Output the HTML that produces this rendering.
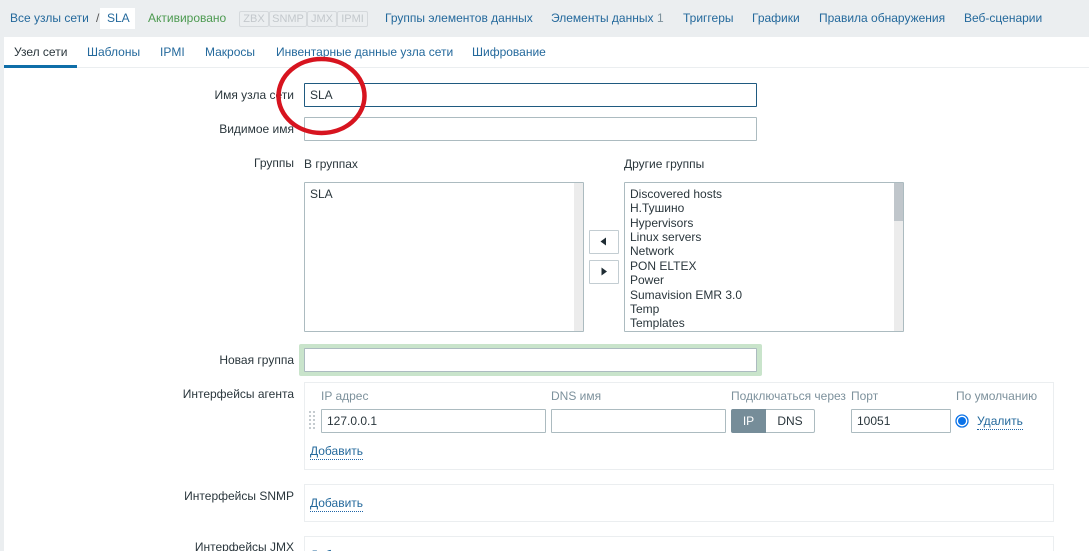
<!DOCTYPE html>
<html lang="ru"><head><meta charset="utf-8"><title>Узел сети</title>
<style>
html,body{margin:0;padding:0;width:1089px;height:551px;overflow:hidden}
#p{left:0;top:0;width:1089px;height:551px;overflow:hidden;background:#ebeef0;font:12px/14px "Liberation Sans",Arial,sans-serif;color:#2a363c}
div,a,span.t{position:absolute;box-sizing:border-box;white-space:nowrap}
a{color:#24699c;text-decoration:none}
.r{text-align:right;width:200px}
.g{color:#7d919c}
.in{background:#fff;border:1px solid #acbbc0;border-radius:1px;height:24px}
.u{border-bottom:1px dotted #1f65a6;line-height:14px;height:16px}
.bx{border:1px solid #ebeef0;background:#fff}
.st{top:11px;height:16px;border:1px solid #d5d9dc;color:#c3c8cc;background:#ebeef0;text-align:center;line-height:14px;font-size:11px;border-radius:2px}
</style></head><body>
<div id="p">
<a style="left:10px;top:11px">Все узлы сети</a>
<span class="t" style="left:96px;top:11px;color:#555">/</span>
<div style="left:100px;top:8px;width:35px;height:21px;background:#fff"></div>
<a style="left:107px;top:11px">SLA</a>
<a style="left:148px;top:11px;color:#4c9a50">Активировано</a>
<div class="st" style="left:239px;width:30px">ZBX</div>
<div class="st" style="left:269px;width:38px">SNMP</div>
<div class="st" style="left:307px;width:30px">JMX</div>
<div class="st" style="left:337px;width:31px">IPMI</div>
<a style="left:385px;top:11px">Группы элементов данных</a>
<a style="left:551px;top:11px">Элементы данных</a>
<span class="t g" style="left:657px;top:11px">1</span>
<a style="left:683px;top:11px">Триггеры</a>
<a style="left:752px;top:11px">Графики</a>
<a style="left:819px;top:11px">Правила обнаружения</a>
<a style="left:964px;top:11px">Веб-сценарии</a>

<div style="left:4px;top:37px;width:1085px;height:514px;background:#fff"></div>
<div style="left:4px;top:67px;width:1085px;height:1px;background:#ebeef0"></div>
<div style="left:4px;top:65px;width:73px;height:3px;background:#0f6ea8"></div>
<span class="t" style="left:14px;top:45px">Узел сети</span>
<a style="left:87px;top:45px">Шаблоны</a>
<a style="left:160px;top:45px">IPMI</a>
<a style="left:205px;top:45px">Макросы</a>
<a style="left:276px;top:45px">Инвентарные данные узла сети</a>
<a style="left:472px;top:45px">Шифрование</a>

<span class="t r" style="left:94px;top:88px">Имя узла сети</span>
<div class="in" style="left:304px;top:83px;width:453px;border-color:#1f5a80;padding:4px 5px">SLA</div>
<span class="t r" style="left:94px;top:122px">Видимое имя</span>
<div class="in" style="left:304px;top:117px;width:453px"></div>

<span class="t r" style="left:94px;top:156px">Группы</span>
<span class="t" style="left:304px;top:157px">В группах</span>
<span class="t" style="left:624px;top:157px">Другие группы</span>
<div class="in" style="left:304px;top:182px;width:280px;height:150px"></div>
<div style="left:574px;top:183px;width:9px;height:148px;background:#ececec"></div>
<span class="t" style="left:310px;top:187px">SLA</span>
<div class="in" style="left:624px;top:182px;width:280px;height:150px"></div>
<div style="left:894px;top:183px;width:9px;height:148px;background:#ececec"></div>
<div style="left:894px;top:183px;width:9px;height:38px;background:#c0c6cb"></div>
<span class="t" style="left:630px;top:187px">Discovered hosts</span>
<span class="t" style="left:630px;top:201px">Н.Тушино</span>
<span class="t" style="left:630px;top:216px">Hypervisors</span>
<span class="t" style="left:630px;top:230px">Linux servers</span>
<span class="t" style="left:630px;top:244px">Network</span>
<span class="t" style="left:630px;top:259px">PON ELTEX</span>
<span class="t" style="left:630px;top:273px">Power</span>
<span class="t" style="left:630px;top:288px">Sumavision EMR 3.0</span>
<span class="t" style="left:630px;top:302px">Temp</span>
<span class="t" style="left:630px;top:316px">Templates</span>
<div class="in" style="left:589px;top:230px;width:30px;height:24px;border-color:#c3cdd2"></div>
<div class="in" style="left:589px;top:260px;width:30px;height:24px;border-color:#c3cdd2"></div>
<svg style="position:absolute;left:589px;top:230px" width="30" height="54"><path d="M17 7.5V15.5L11.5 11.5Z" fill="#1f2c33"/><path d="M12.5 37.5V45.5L18 41.5Z" fill="#1f2c33"/></svg>

<span class="t r" style="left:94px;top:353px">Новая группа</span>
<div style="left:299px;top:344px;width:463px;height:32px;background:#c9e4cb;border-radius:2px"></div>
<div class="in" style="left:304px;top:348px;width:453px;height:24px"></div>

<span class="t r" style="left:94px;top:387px">Интерфейсы агента</span>
<div class="bx" style="left:304px;top:382px;width:750px;height:88px"></div>
<span class="t g" style="left:321px;top:389px">IP адрес</span>
<span class="t g" style="left:551px;top:389px">DNS имя</span>
<span class="t g" style="left:731px;top:389px">Подключаться через</span>
<span class="t g" style="left:851px;top:389px">Порт</span>
<span class="t g" style="left:956px;top:389px">По умолчанию</span>
<svg style="position:absolute;left:309px;top:411px" width="8" height="20" fill="#c5cbcf"><rect x="0" y="0" width="2" height="2"/><rect x="4" y="0" width="2" height="2"/><rect x="0" y="4" width="2" height="2"/><rect x="4" y="4" width="2" height="2"/><rect x="0" y="8" width="2" height="2"/><rect x="4" y="8" width="2" height="2"/><rect x="0" y="12" width="2" height="2"/><rect x="4" y="12" width="2" height="2"/><rect x="0" y="16" width="2" height="2"/><rect x="4" y="16" width="2" height="2"/></svg>
<div class="in" style="left:321px;top:409px;width:225px;padding:4px 5px">127.0.0.1</div>
<div class="in" style="left:551px;top:409px;width:175px"></div>
<div style="left:731px;top:409px;width:35px;height:24px;background:#768d99;color:#fff;text-align:center;line-height:24px;border-radius:2px 0 0 2px">IP</div>
<div style="left:766px;top:409px;width:49px;height:24px;background:#fff;border:1px solid #acbbc0;border-left:0;text-align:center;line-height:22px;border-radius:0 2px 2px 0">DNS</div>
<div class="in" style="left:851px;top:409px;width:100px;padding:4px 5px">10051</div>
<svg style="position:absolute;left:955px;top:414px" width="14" height="14"><circle cx="7" cy="7" r="6" fill="#fff" stroke="#0a72e8" stroke-width="1.3"/><circle cx="7" cy="7" r="4" fill="#0a72e8"/></svg>
<a class="u" style="left:977px;top:414px">Удалить</a>
<a class="u" style="left:310px;top:444px">Добавить</a>

<span class="t r" style="left:94px;top:489px">Интерфейсы SNMP</span>
<div class="bx" style="left:304px;top:484px;width:750px;height:38px"></div>
<a class="u" style="left:310px;top:496px">Добавить</a>

<span class="t r" style="left:94px;top:540px">Интерфейсы JMX</span>
<div class="bx" style="left:304px;top:536px;width:750px;height:40px"></div>
<a class="u" style="left:310px;top:548px">Добавить</a>

<svg style="position:absolute;left:270px;top:52px" width="104" height="90"><ellipse cx="51.5" cy="44" rx="43" ry="37" fill="none" stroke="#d7141f" stroke-width="4.5"/></svg>
</div>
</body></html>
